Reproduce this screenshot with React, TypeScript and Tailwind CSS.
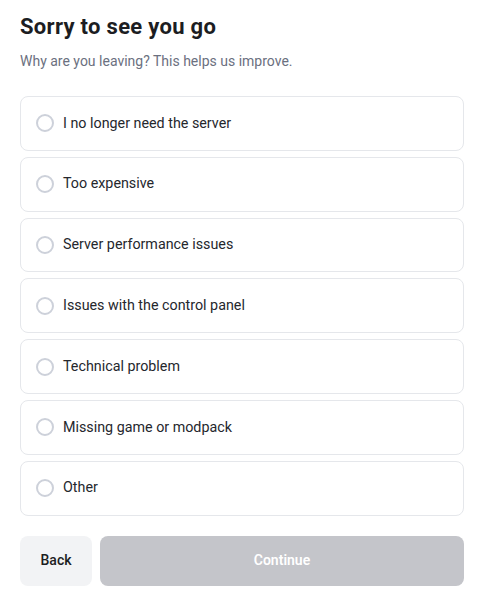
import React from "react";

const reasons = [
  "I no longer need the server",
  "Too expensive",
  "Server performance issues",
  "Issues with the control panel",
  "Technical problem",
  "Missing game or modpack",
  "Other",
];

export default function App() {
  return (
    <div
      className="w-[481px] h-[605px] bg-white pl-5 pr-[17px] pt-[13px]"
      style={{ fontFamily: "Roboto, 'Liberation Sans', sans-serif" }}
    >
      <h1 className="text-[22px] leading-[28px] font-bold text-[#1c1d22] tracking-[0.3px]">
        Sorry to see you go
      </h1>
      <p className="mt-[10px] text-[14px] leading-[20px] text-[#6b7080]">
        Why are you leaving? This helps us improve.
      </p>
      <div className="mt-[25px] flex flex-col gap-[6px]">
        {reasons.map((r) => (
          <div
            key={r}
            className="h-[54.8px] flex items-center rounded-[8px] border border-[#e5e7eb] pl-[15px]"
          >
            <span className="w-[18px] h-[18px] rounded-full border-2 border-[#cdd1da] shrink-0" />
            <span className="ml-[9px] text-[14.3px] text-[#25272d]">{r}</span>
          </div>
        ))}
      </div>
      <div className="mt-[20px] flex gap-2">
        <button className="w-[72px] h-[50px] rounded-[8px] bg-[#f2f3f5] text-[14px] font-medium text-[#1c1d22]">
          Back
        </button>
        <button className="flex-1 h-[50px] rounded-[8px] bg-[#c4c5ca] text-[14px] font-semibold text-white">
          Continue
        </button>
      </div>
    </div>
  );
}
